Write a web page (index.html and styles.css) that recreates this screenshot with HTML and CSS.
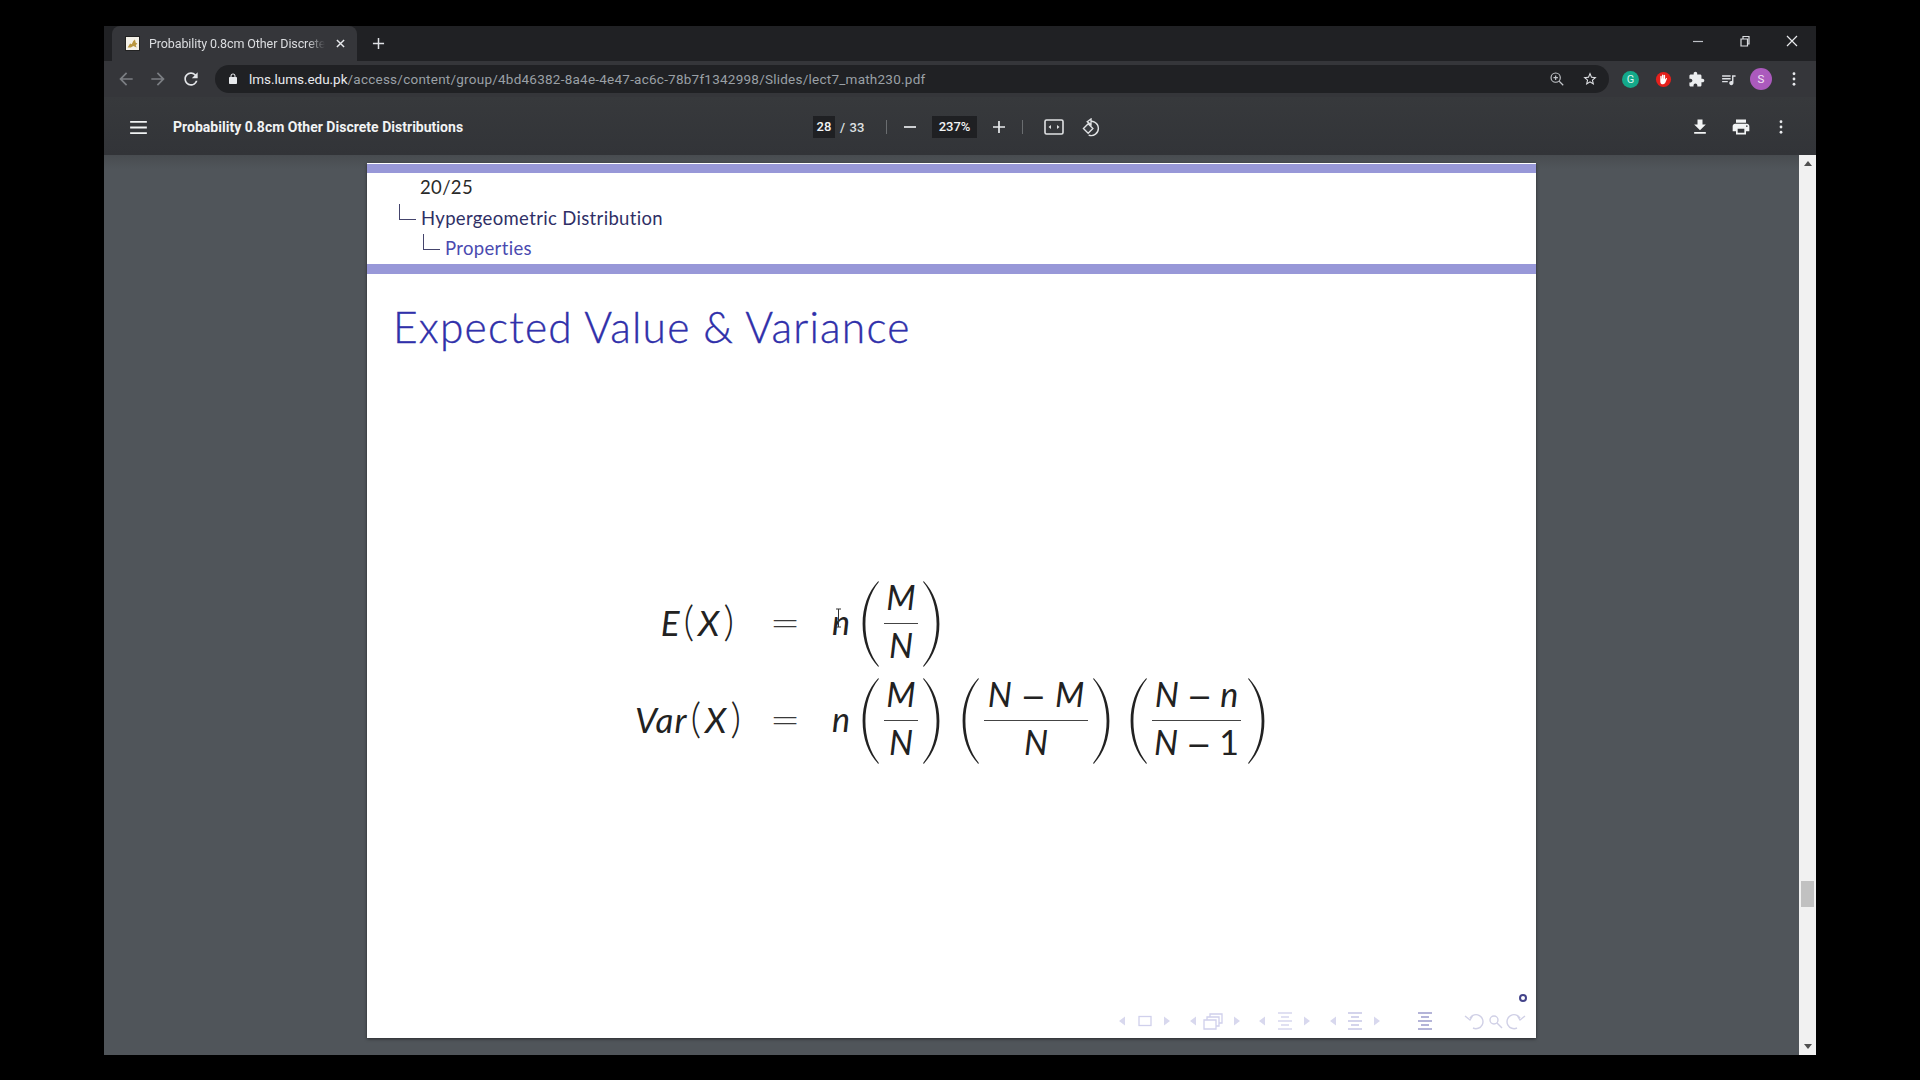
FILE: index.html
```html
<!DOCTYPE html>
<html lang="en">
<head>
<meta charset="utf-8">
<title>Probability 0.8cm Other Discrete Distributions</title>
<link rel="stylesheet" href="styles.css">
</head>
<body>
<svg class="defs" width="0" height="0" aria-hidden="true">
  <symbol id="paren" viewBox="0 0 18 86"><path d="M17 .8 C8 12 3.400 27 3.400 43 C3.400 59 8 74 17 85.200 L16.200 85.800 C6 75 .6 60 .6 43 C.6 26 6 11 16.200 .2 Z"/></symbol>
</svg>
<div class="window">
  <div class="tabstrip">
    <div class="tab">
      <svg class="favicon" viewBox="0 0 16 16"><rect width="16" height="16" fill="#f4f1e8"/><path d="M2 13l3-5 2 1 2-4 2-2 1 4 2 1-2 2 1 3-4-2-3 2z" fill="#b9963f"/></svg>
      <span class="tab-title">Probability 0.8cm Other Discrete</span>
      <svg class="tab-x" viewBox="0 0 10 10"><path d="M1 1l8 8M9 1l-8 8" stroke="#e8eaed" stroke-width="1.6"/></svg>
    </div>
    <svg class="new-tab" viewBox="0 0 14 14"><path d="M7 1v12M1 7h12" stroke="#dfe1e5" stroke-width="1.6"/></svg>
    <div class="win-ctrls">
      <svg class="win" viewBox="0 0 12 12"><path d="M1 6.500h10" stroke="#bdc1c6" stroke-width="1.2"/></svg>
      <svg class="win" viewBox="0 0 12 12"><path d="M2 4h6.500v7H2zM4 4V1.500h6V9H8.500" fill="none" stroke="#dadce0" stroke-width="1.2"/></svg>
      <svg class="win" viewBox="0 0 12 12"><path d="M1 1l10 10M11 1L1 11" stroke="#e8eaed" stroke-width="1.2"/></svg>
    </div>
  </div>
  <div class="toolbar">
    <svg class="nav-ic" viewBox="0 0 24 24"><path fill="#7b7e83" d="M20 11H7.830l5.590-5.590L12 4l-8 8 8 8 1.410-1.410L7.830 13H20v-2z"/></svg>
    <svg class="nav-ic" viewBox="0 0 24 24"><path fill="#7b7e83" d="M12 4l-1.410 1.410L16.170 11H4v2h12.170l-5.580 5.590L12 20l8-8z"/></svg>
    <svg class="nav-ic reload" viewBox="0 0 24 24"><path fill="#e3e5e8" d="M17.650 6.350A7.958 7.958 0 0012 4c-4.420 0-7.990 3.580-7.990 8s3.570 8 7.990 8c3.730 0 6.840-2.550 7.730-6h-2.080A5.990 5.990 0 0112 18c-3.310 0-6-2.690-6-6s2.690-6 6-6c1.660 0 3.140.69 4.220 1.780L13 11h7V4l-2.350 2.350z"/></svg>
    <div class="omnibox">
      <svg class="lock" viewBox="0 0 24 24"><path fill="#e8eaed" d="M18 8h-1V6c0-2.760-2.240-5-5-5S7 3.240 7 6v2H6c-1.100 0-2 .9-2 2v10c0 1.100.9 2 2 2h12c1.100 0 2-.9 2-2V10c0-1.100-.9-2-2-2zM9 6c0-1.660 1.340-3 3-3s3 1.340 3 3v2H9V6z"/></svg>
      <span class="url"><span class="host">lms.lums.edu.pk</span>/access/content/group/4bd46382-8a4e-4e47-ac6c-78b7f1342998/Slides/lect7_math230.pdf</span>
      <svg class="omni-ic push" viewBox="0 0 18 18"><circle cx="7.500" cy="7.500" r="5.200" fill="none" stroke="#c4c7cb" stroke-width="1.300"/><path d="M11.500 11.500L16 16M7.500 5v5M5 7.500h5" stroke="#c4c7cb" stroke-width="1.300"/></svg>
      <svg class="omni-ic star" viewBox="0 0 24 24"><path fill="#dfe1e5" d="M22 9.240l-7.190-.62L12 2 9.190 8.630 2 9.240l5.460 4.730L5.820 21 12 17.270 18.180 21l-1.630-7.030L22 9.240zM12 15.400l-3.760 2.270 1-4.280-3.320-2.880 4.380-.38L12 6.100l1.710 4.040 4.380.38-3.320 2.880 1 4.280L12 15.400z"/></svg>
    </div>
    <div class="exts">
      <span class="ext ext-g">G</span>
      <svg class="ext-svg" viewBox="0 0 18 18"><circle cx="9" cy="9" r="8" fill="#e5201c"/><path d="M5.600 9V5.500a.8.8 0 011.500 0V8h.3V4.300a.8.8 0 011.500 0V8h.3V4.600a.8.8 0 011.500 0V9l1-1.300c.6-.6 1.300 0 1 .6l-1.800 4.200c-.5 1-1.200 1.500-2.300 1.500-2 0-3-1-3-3z" fill="#fff"/></svg>
      <svg class="ext-svg" viewBox="0 0 24 24"><path fill="#eceef0" d="M20.500 11H19V7c0-1.100-.9-2-2-2h-4V3.500C13 2.120 11.880 1 10.500 1S8 2.120 8 3.500V5H4c-1.100 0-1.990.9-1.990 2v3.800H3.500c1.490 0 2.700 1.210 2.700 2.700s-1.210 2.700-2.700 2.700H2V20c0 1.100.9 2 2 2h3.800v-1.500c0-1.490 1.210-2.700 2.700-2.700 1.490 0 2.700 1.210 2.700 2.700V22H17c1.100 0 2-.9 2-2v-4h1.500c1.380 0 2.500-1.120 2.500-2.500S21.880 11 20.500 11z"/></svg>
      <svg class="ext-svg ext-media" viewBox="0 0 24 24"><path fill="#dfe1e5" d="M15 6H3v2h12V6zm0 4H3v2h12v-2zM3 16h8v-2H3v2zM17 6v8.180c-.31-.11-.65-.18-1-.18-1.660 0-3 1.340-3 3s1.340 3 3 3 3-1.340 3-3V8h3V6h-5z"/></svg>
      <span class="avatar">S</span>
      <svg class="dots" viewBox="0 0 4 16"><circle cx="2" cy="2" r="1.600"/><circle cx="2" cy="8" r="1.600"/><circle cx="2" cy="14" r="1.600"/></svg>
    </div>
  </div>
  <div class="pdfbar">
    <div class="pdf-left">
      <svg class="menu" viewBox="0 0 18 14"><path d="M0 1h18M0 7h18M0 13h18" stroke="#f1f3f4" stroke-width="2"/></svg>
      <span class="pdf-title">Probability 0.8cm Other Discrete Distributions</span>
    </div>
    <div class="pdf-center">
      <span class="pg-box">28</span>
      <span class="pg-total">/ &nbsp;33</span>
      <span class="sep"></span>
      <svg class="zoom-btn" viewBox="0 0 14 14"><path d="M1 7h12" stroke="#e8eaed" stroke-width="1.700"/></svg>
      <span class="zoom-box">237%</span>
      <svg class="zoom-btn" viewBox="0 0 14 14"><path d="M1 7h12M7 1v12" stroke="#e8eaed" stroke-width="1.700"/></svg>
      <span class="sep"></span>
      <svg class="fit" viewBox="0 0 20 16"><rect x="1" y="1" width="18" height="14" rx="1.500" fill="none" stroke="#e0e2e4" stroke-width="1.600"/><path d="M4.500 8l2.500-2v4zM15.500 8L13 6v4z" fill="#e0e2e4"/></svg>
      <svg class="rot" viewBox="0 0 20 20"><path d="M6 4.500A7.500 7.500 0 1 1 7 18" fill="none" stroke="#e0e2e4" stroke-width="1.500"/><path d="M9.500 1v6L5.500 4zM1.500 11l5-5 5 5-5 5z" fill="#3a3d41" stroke="#e0e2e4" stroke-width="1.400"/></svg>
    </div>
    <div class="pdf-right">
      <svg class="pdf-ic" viewBox="0 0 24 24"><path fill="#f1f3f4" d="M19 9h-4V3H9v6H5l7 7 7-7zM5 18v2h14v-2H5z"/></svg>
      <svg class="pdf-ic" viewBox="0 0 24 24"><path fill="#f1f3f4" d="M19 8H5c-1.660 0-3 1.340-3 3v6h4v4h12v-4h4v-6c0-1.660-1.340-3-3-3zm-3 11H8v-5h8v5zm3-7c-.55 0-1-.45-1-1s.45-1 1-1 1 .45 1 1-.45 1-1 1zm-1-9H6v4h12V3z"/></svg>
      <svg class="dots" viewBox="0 0 4 16"><circle cx="2" cy="2" r="1.600"/><circle cx="2" cy="8" r="1.600"/><circle cx="2" cy="14" r="1.600"/></svg>
    </div>
  </div>
  <div class="viewer">
    <div class="canvas">
      <div class="page">
        <div class="bar bar-top"></div>
        <div class="crumbs">
          <div class="crumb c-num">20/25</div>
          <div class="crumb c-sec"><span class="tree"></span><span>Hypergeometric Distribution</span></div>
          <div class="crumb c-sub"><span class="tree"></span><span>Properties</span></div>
        </div>
        <div class="bar bar-bot"></div>
        <h1 class="slide-title">Expected Value &amp; Variance</h1>
        <div class="math">
          <div class="lhs"><i>E</i><span>(</span><i>X</i><span>)</span></div>
          <div class="eq">=</div>
          <div class="rhs">
            <span class="var-n"><i>n</i><svg class="ibeam" viewBox="0 0 7 20"><path d="M1 1h5M3.500 1v18M1 19h5" stroke="#333" stroke-width="1" fill="none"/></svg></span>
            <svg class="paren"><use href="#paren"/></svg>
            <span class="frac f-s"><i>M</i><b></b><i>N</i></span>
            <svg class="paren flip"><use href="#paren"/></svg>
          </div>
          <div class="lhs"><i>Var</i><span>(</span><i>X</i><span>)</span></div>
          <div class="eq">=</div>
          <div class="rhs">
            <span class="var-n"><i>n</i></span>
            <svg class="paren"><use href="#paren"/></svg>
            <span class="frac f-s"><i>M</i><b></b><i>N</i></span>
            <svg class="paren flip"><use href="#paren"/></svg>
            <svg class="paren p-gap"><use href="#paren"/></svg>
            <span class="frac f-m"><span class="num"><i>N</i><span class="minus">−</span><i>M</i></span><b></b><i>N</i></span>
            <svg class="paren flip"><use href="#paren"/></svg>
            <svg class="paren p-gap2"><use href="#paren"/></svg>
            <span class="frac f-l"><span class="num"><i>N</i><span class="minus">−</span><i>n</i></span><b></b><span class="num"><i>N</i><span class="minus">−</span><span>1</span></span></span>
            <svg class="paren flip"><use href="#paren"/></svg>
          </div>
        </div>
        <span class="ring"></span>
        <svg class="beamer-nav" viewBox="0 0 416 20">
          <path fill="#d8d8ee" d="M7 10l6-4.500v9zM52 5.500v9l6-4.500zM78 10l6-4.500v9zM122 5.500v9l6-4.500zM147 10l6-4.500v9zM192 5.500v9l6-4.500zM218 10l6-4.500v9zM262 5.500v9l6-4.500z"/>
          <rect x="27" y="5.500" width="12" height="9" fill="none" stroke="#d0d0ec" stroke-width="1.300"/>
          <path d="M92 9h12v9H92zM95 9V6h12v9h-3M98 6V3h12v9h-3" fill="none" stroke="#d0d0ec" stroke-width="1.300"/>
          <g fill="none" stroke="#d0d0e6" stroke-width="1.400">
            <circle cx="382" cy="9" r="4"/><path d="M385 12l5 5"/>
            <path d="M358 7a7 7 0 1 1 3 10M353 5l5 4 3-5"/>
            <path d="M408 7a7 7 0 1 0-3 10M413 5l-5 4-3-5"/>
          </g>
          <g stroke-width="1.400">
            <path d="M166 2h14M169 6h8M166 10h14M169 14h8M166 18h14" stroke="#d6d6ee"/>
            <path d="M236 2h14M239 6h8M236 10h14M239 14h8M236 18h14" stroke="#c6c6e6"/>
            <path d="M306 2h14M309 6h8M306 10h14M309 14h8M306 18h14" stroke="#9c9ccc"/>
          </g>
        </svg>
      </div>
    </div>
    <div class="scrollbar">
      <span class="sb-btn sb-up"></span>
      <div class="sb-track"><span class="sb-thumb"></span></div>
      <span class="sb-btn sb-down"></span>
    </div>
  </div>
</div>
</body>
</html>
```

FILE: styles.css
```css
* { box-sizing: border-box; }
html, body { margin: 0; height: 100%; }
body { background: #000; padding: 26px 104px 0; font-family: Roboto, "Liberation Sans", sans-serif; overflow: hidden; }
.defs { position: absolute; }
.window { width: 1712px; height: 1029px; display: flex; flex-direction: column; background: #35363a; }

.tabstrip { height: 35px; background: #202124; display: flex; align-items: center; padding-left: 8px; flex: none; }
.tab { width: 245px; height: 35px; background: #35363a; border-radius: 8px 8px 0 0; display: flex; align-items: center; padding: 0 12px 0 13px; color: #dcdee1; font-size: 12.500px; }
.favicon { width: 15px; height: 15px; flex: none; border: 1px solid #222; }
.tab-title { width: 177px; margin-left: 9px; white-space: nowrap; overflow: hidden; letter-spacing: -.1px; -webkit-mask-image: linear-gradient(90deg, #000 90%, transparent); mask-image: linear-gradient(90deg, #000 90%, transparent); }
.tab-x { width: 9px; height: 9px; margin-left: 11px; flex: none; }
.new-tab { width: 13px; height: 13px; margin-left: 15px; flex: none; }
.win-ctrls { margin-left: auto; display: flex; gap: 35px; padding-right: 18px; margin-top: -6px; }
.win { width: 12px; height: 12px; }

.toolbar { height: 36px; display: flex; align-items: center; padding-left: 6px; flex: none; }
.nav-ic { width: 20px; height: 20px; margin: 0 6px; flex: none; }
.reload { margin: 0 5px 0 7px; }
.omnibox { width: 1394px; height: 28px; margin-left: 9px; border-radius: 14px; background: #202124; display: flex; align-items: center; padding: 0 11px 0 12px; color: #9aa0a6; font-size: 13.500px; flex: none; }
.lock { width: 12px; height: 12px; flex: none; }
.url { margin-left: 10px; letter-spacing: .24px; }
.host { color: #e8eaed; letter-spacing: -.03px; }
.omni-ic { width: 16px; height: 16px; }
.push { margin-left: auto; margin-right: -2px; }
.star { margin-left: 19px; }
.exts { display: flex; align-items: center; margin-left: 13px; }
.ext { width: 17px; height: 17px; border-radius: 50%; background: #14a98a; color: #d8f5ee; font-size: 11px; text-align: center; line-height: 17px; }
.ext-svg { width: 17px; height: 17px; margin-left: 16px; }
.ext-media { margin-left: 15px; }
.avatar { width: 22px; height: 22px; border-radius: 50%; background: #ab5abd; color: #f2e6f5; font-size: 11.500px; text-align: center; line-height: 22px; margin-left: 13px; }
.dots { width: 4px; height: 14px; fill: #e8eaed; flex: none; }
.exts .dots { margin-left: 20px; }

.pdfbar { height: 58px; padding-top: 2px; background: linear-gradient(#37393c, #323438); display: flex; align-items: center; flex: none; color: #f1f3f4; }
.pdf-left { width: 709px; display: flex; align-items: center; padding-left: 26px; flex: none; }
.menu { width: 17px; height: 13px; flex: none; }
.pdf-title { margin-left: 26px; font-weight: 700; font-size: 14px; letter-spacing: .02px; }
.pdf-center { display: flex; align-items: center; font-size: 13px; font-weight: 500; }
.pg-box { width: 22px; height: 22px; background: #1f2023; text-align: center; line-height: 22px; }
.pg-total { margin-left: 5px; color: #dfe1e4; width: 38px; word-spacing: -1px; }
.sep { width: 1px; height: 14px; background: #6a6d70; margin: 0 16px 0 8px; }
.zoom-btn { width: 14px; height: 14px; flex: none; }
.zoom-box { width: 45px; height: 22px; margin: 0 15px; background: #1f2023; text-align: center; line-height: 22px; }
.zoom-btn + .sep { margin: 0 21px 0 16px; }
.fit { width: 20px; height: 16px; flex: none; }
.rot { width: 19px; height: 19px; margin-left: 18px; flex: none; }
.pdf-right { margin-left: auto; display: flex; align-items: center; padding-right: 33px; }
.pdf-ic { width: 20px; height: 20px; margin-right: 21px; }
.pdf-ic + .pdf-ic { margin-right: 28px; }

.viewer { flex: 1; min-height: 0; display: flex; background: #50555a; }
.canvas { flex: 1; padding-top: 8px; display: flex; justify-content: center; background: linear-gradient(#484c50, #50555a 14px); }
.page { width: 1169px; height: 875px; background: #fff; box-shadow: 0 1px 3px rgba(0,0,0,.5); display: flex; flex-direction: column; font-family: Lato, "Open Sans", sans-serif; }
.bar { background: #9898d8; flex: none; }
.bar-top { height: 9px; margin-top: 1px; }
.bar-bot { height: 10px; }
.crumbs { height: 91px; font-size: 18.500px; }
.crumb { height: 31px; display: flex; align-items: center; white-space: nowrap; letter-spacing: .34px; }
.c-num { padding-left: 53px; color: #2a2a2a; margin-top: -2px; }
.c-sec { padding-left: 32px; color: #2f2f66; }
.c-sub { padding-left: 56px; color: #4a4ab0; height: 30px; }
.tree { width: 17px; height: 16px; border-left: 1.500px solid #44446c; border-bottom: 1.500px solid #44446c; margin: -12px 5px 0 0; flex: none; }
.slide-title { margin: 23px 0 0 26px; font-weight: 300; font-size: 42.500px; line-height: 60px; color: #3030aa; letter-spacing: 1.2px; -webkit-text-stroke: .35px #3030aa; }

.math { margin: 224px 0 0 268px; display: grid; grid-template-columns: 105px 25px auto; column-gap: 30px; grid-auto-rows: 86px; row-gap: 11px; align-items: center; justify-content: start; font-size: 34px; color: #222; }
.lhs { text-align: right; white-space: nowrap; line-height: 40px; padding: 0 2px 5px 0; letter-spacing: 1px; font-size: 35px; }
.lhs span { font-size: 41px; font-weight: 300; padding: 0 3px; }
.eq { text-align: center; font-size: 36px; color: #3a3a3a; font-family: "DejaVu Sans", sans-serif; font-weight: 300; line-height: 40px; padding-bottom: 3px; }
.rhs { display: flex; align-items: center; height: 86px; margin-left: 7px; }
.var-n { position: relative; width: 30px; flex: none; line-height: 40px; padding-bottom: 5px; }
.ibeam { position: absolute; left: 3px; top: 6px; width: 7px; height: 20px; }
.paren { width: 18px; height: 86px; flex: none; fill: #222; }
.flip { transform: scaleX(-1); }
.p-gap { margin-left: 22px; }
.p-gap2 { margin-left: 20px; }
.frac { display: flex; flex-direction: column; align-items: center; flex: none; line-height: 36px; margin: 0 4px; padding-bottom: 6px; }
.frac b { display: block; width: 100%; height: 1.500px; background: #444; margin: 8px 0 3px; }
.f-s { width: 34px; }
.f-m { width: 104px; }
.f-l { width: 89px; margin-right: 6px; }
.num { white-space: nowrap; display: flex; gap: 8px; align-items: baseline; height: 36px; }
.f-m .num { gap: 9px; }
.minus { font-family: "DejaVu Sans", sans-serif; font-size: 30px; line-height: 20px; }
.ring { width: 8px; height: 8px; border: 2px solid #44448a; border-radius: 50%; align-self: flex-end; margin: auto 9px 0 0; }
.beamer-nav { width: 416px; height: 20px; align-self: flex-end; margin: 9px 8px 7px 0; flex: none; }

.scrollbar { width: 17px; flex: none; background: #f1f1f1; display: flex; flex-direction: column; }
.sb-btn { height: 17px; flex: none; display: flex; justify-content: center; align-items: center; }
.sb-up::before { content: ""; border: 4px solid transparent; border-top: 0; border-bottom: 5px solid #505050; }
.sb-down::before { content: ""; border: 4px solid transparent; border-bottom: 0; border-top: 5px solid #505050; }
.sb-track { flex: 1; padding: 709px 2px 0; }
.sb-thumb { display: block; height: 26px; background: #c1c1c1; }
```
